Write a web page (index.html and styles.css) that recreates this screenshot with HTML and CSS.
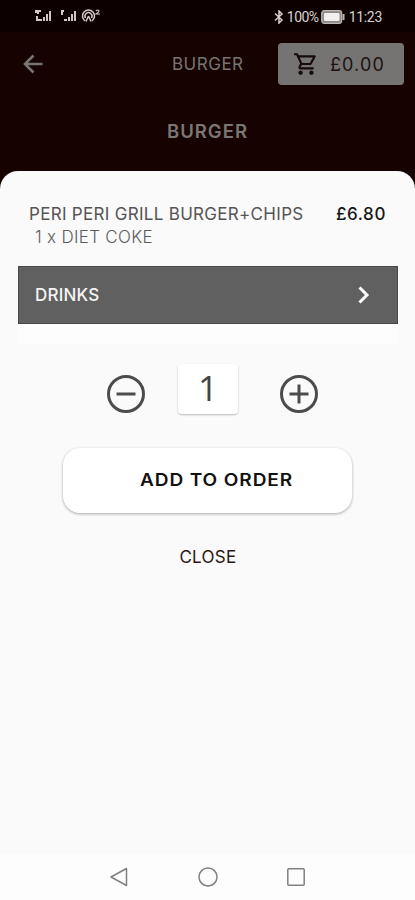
FILE: index.html
```html
<!DOCTYPE html>
<html lang="en">
<head>
<meta charset="utf-8">
<meta name="viewport" content="width=device-width, initial-scale=1">
<title>Burger</title>
<link rel="stylesheet" href="styles.css">
</head>
<body>
<div class="status">
  <svg class="signals" width="68" height="16" viewBox="0 0 68 16" fill="#cfc8c6">
    <path d="M1 2h6v2H5v2H3V5H1zM2 8h2v3h4v2H2zM9 9h2v4H9zM12 6h2v7h-2zM15 3h2v10h-2z"/>
    <path d="M27 2h3v2h-1v3h-2zM30 11h3v2h-3zM34 9h2v4h-2zM37 6h2v7h-2zM40 3h2v10h-2z"/>
    <g fill="none" stroke="#cfc8c6" stroke-width="1.500">
      <path d="M51 12.800a6 6 0 1 1 7 0M51.500 10a3.500 3.500 0 1 1 6 0M54.500 8l-2.500 5.500M54.500 8l2.500 5.500"/>
      <path d="M62 3q2-2 3 0q0 1-3 3h4" stroke-width="1.200"/>
    </g>
  </svg>
  <div class="status-right">
    <svg width="10" height="14" viewBox="0 0 10 14" fill="none" stroke="#d8d2d0" stroke-width="1.500"><path d="M1 3.500l7 6.500-3 3V1l3 3-7 6.500"/></svg>
    <span class="percent">100%</span>
    <svg class="battery" width="24" height="14" viewBox="0 0 24 14"><rect x=".7" y=".7" width="20" height="12.600" rx="2.500" fill="#8d8886" stroke="#bdb8b6" stroke-width="1.200"/><rect x="3" y="3" width="15.500" height="8" rx="1" fill="#f2efee"/><path d="M21.500 4h2v6h-2z" fill="#bdb8b6"/></svg>
    <span class="clock">11:23</span>
  </div>
</div>
<header class="bar">
  <svg class="back" width="20" height="20" viewBox="0 0 20 20" fill="none" stroke="#797371" stroke-width="2.600"><path d="M19.500 10H2M10.500 1.500L2 10l8.500 8.500"/></svg>
  <span class="bar-title">BURGER</span>
  <div class="cart">
    <svg width="26" height="26" viewBox="0 0 24 24" fill="#160b09"><path d="M15.550 13c.75 0 1.410-.41 1.750-1.030l3.580-6.490A.996.996 0 0 0 20.010 4H5.210l-.94-2H1v2h2l3.600 7.590-1.350 2.440C4.520 15.370 5.480 17 7 17h12v-2H7l1.100-2h7.450zM6.160 6h12.150l-2.760 5H8.530L6.160 6zM7 18c-1.100 0-1.990.9-1.990 2S5.900 22 7 22s2-.9 2-2-.9-2-2-2zm10 0c-1.100 0-1.990.9-1.990 2s.89 2 1.990 2 2-.9 2-2-.9-2-2-2z"/></svg>
    <span class="total">£0.00</span>
  </div>
</header>
<h1 class="heading">BURGER</h1>
<main class="sheet">
  <div class="item"><span class="name">PERI PERI GRILL BURGER+CHIPS</span><span class="price">£6.80</span></div>
  <div class="extra">1 x DIET COKE</div>
  <div class="drinks"><span>DRINKS</span>
    <svg width="12" height="18" viewBox="0 0 12 18" fill="none" stroke="#fff" stroke-width="3"><path d="M1.500 1.500L9 9l-7.500 7.500"/></svg>
  </div>
  <div class="strip"></div>
  <div class="quantity">
    <svg width="40" height="40" viewBox="0 0 40 40" fill="none" stroke="#4c4c4c" stroke-width="3"><circle cx="20" cy="20" r="17.500"/><path d="M10.500 20h19"/></svg>
    <div class="count">1</div>
    <svg width="40" height="40" viewBox="0 0 40 40" fill="none" stroke="#4c4c4c" stroke-width="3"><circle cx="20" cy="20" r="17.500"/><path d="M10.500 20h19M20 10.500v19"/></svg>
  </div>
  <div class="add"><span>ADD TO ORDER</span></div>
  <div class="close"><span>CLOSE</span></div>
</main>
<nav class="nav">
  <svg width="20" height="20" viewBox="0 0 20 20"><path d="M17.500 1.500v17L2 10z"/></svg>
  <svg width="20" height="20" viewBox="0 0 20 20"><circle cx="10" cy="10" r="9"/></svg>
  <svg width="20" height="20" viewBox="0 0 20 20"><rect x="1.800" y="1.800" width="16.400" height="16.400" rx="1"/></svg>
</nav>
</body>
</html>
```
FILE: styles.css
```css
* { box-sizing: border-box; }
body {
  margin: 0;
  height: 900px;
  display: flex;
  flex-direction: column;
  overflow: hidden;
  background: #160300;
  font-family: Inter, "Liberation Sans", sans-serif;
  font-size: 17px;
  white-space: nowrap;
}
svg { display: block; flex: none; }
.status {
  height: 32px;
  padding: 1px 33px 0 34px;
  display: flex;
  align-items: center;
  justify-content: space-between;
  background: #0d0100;
  color: #d8d2d0;
  font: 14px/16px Roboto, sans-serif;
}
.signals { margin-top: -1px; }
.status-right { display: flex; align-items: center; }
.percent { margin-left: 3px; letter-spacing: -.5px; }
.battery { margin-left: 2px; }
.clock { margin-left: 4px; letter-spacing: -.3px; }
.bar {
  height: 64px;
  padding: 0 11px 0 23px;
  display: flex;
  align-items: center;
  color: #797371;
}
.bar-title { margin-left: 129px; width: 106px; letter-spacing: .5px; }
.cart {
  height: 42px;
  width: 126px;
  padding-left: 15px;
  display: flex;
  align-items: center;
  border-radius: 4px;
  background: #767473;
  color: #1c1210;
}
.total { margin-left: 11px; font-size: 18px; letter-spacing: 1.100px; }
.heading {
  margin: 0;
  height: 75px;
  padding-top: 24px;
  font-size: 18.500px;
  font-weight: 600;
  line-height: 22px;
  letter-spacing: 1px;
  text-align: center;
  color: #7b7573;
}
.sheet {
  flex: 1;
  padding: 32px 17px 0 18px;
  border-radius: 18px 18px 0 0;
  background: #fafafa;
}
.item {
  display: flex;
  justify-content: space-between;
  padding: 0 12px 0 11px;
  line-height: 23px;
}
.name { color: #555; letter-spacing: .3px; }
.price { color: #171717; font-weight: 500; letter-spacing: .6px; }
.extra { padding-left: 17px; line-height: 23px; font-weight: 300; letter-spacing: .3px; color: #5c5c5c; }
.drinks {
  height: 58px;
  margin-top: 17px;
  padding: 0 27px 0 16px;
  display: flex;
  align-items: center;
  justify-content: space-between;
  border: 1px solid #494949;
  background: #606060;
  color: #f4f4f4;
  font-weight: 500;
  letter-spacing: .2px;
}
.strip { height: 20px; background: #fdfdfd; }
.quantity {
  height: 53px;
  margin: 17px 79px 0 88px;
  display: flex;
  align-items: flex-end;
  justify-content: space-between;
}
.count {
  width: 60px;
  height: 50px;
  margin: 0 9px 0 0;
  border-radius: 4px;
  background: #fff;
  box-shadow: 0 1px 2px #0004;
  color: #444;
  font: 35px/47px "Open Sans", sans-serif;
  text-align: center;
}
.add {
  width: 289px;
  height: 65px;
  margin: 34px 0 0 45px;
  padding-left: 77px;
  border-radius: 17px;
  background: #fff;
  box-shadow: 0 1px 3px #0005;
  color: #111;
  font-weight: 600;
  line-height: 64px;
}
.add span {
  display: inline-block;
  transform: scaleX(1.12);
  transform-origin: left;
  letter-spacing: .8px;
}
.close { margin-top: 33px; text-align: center; line-height: 22px; letter-spacing: .3px; color: #2b1714; }
.nav {
  height: 46px;
  padding: 0 109px;
  display: flex;
  align-items: center;
  justify-content: space-between;
  background: #fdfdfd;
}
.nav svg { fill: none; stroke: #808080; stroke-width: 1.500; stroke-linejoin: round; }
```
